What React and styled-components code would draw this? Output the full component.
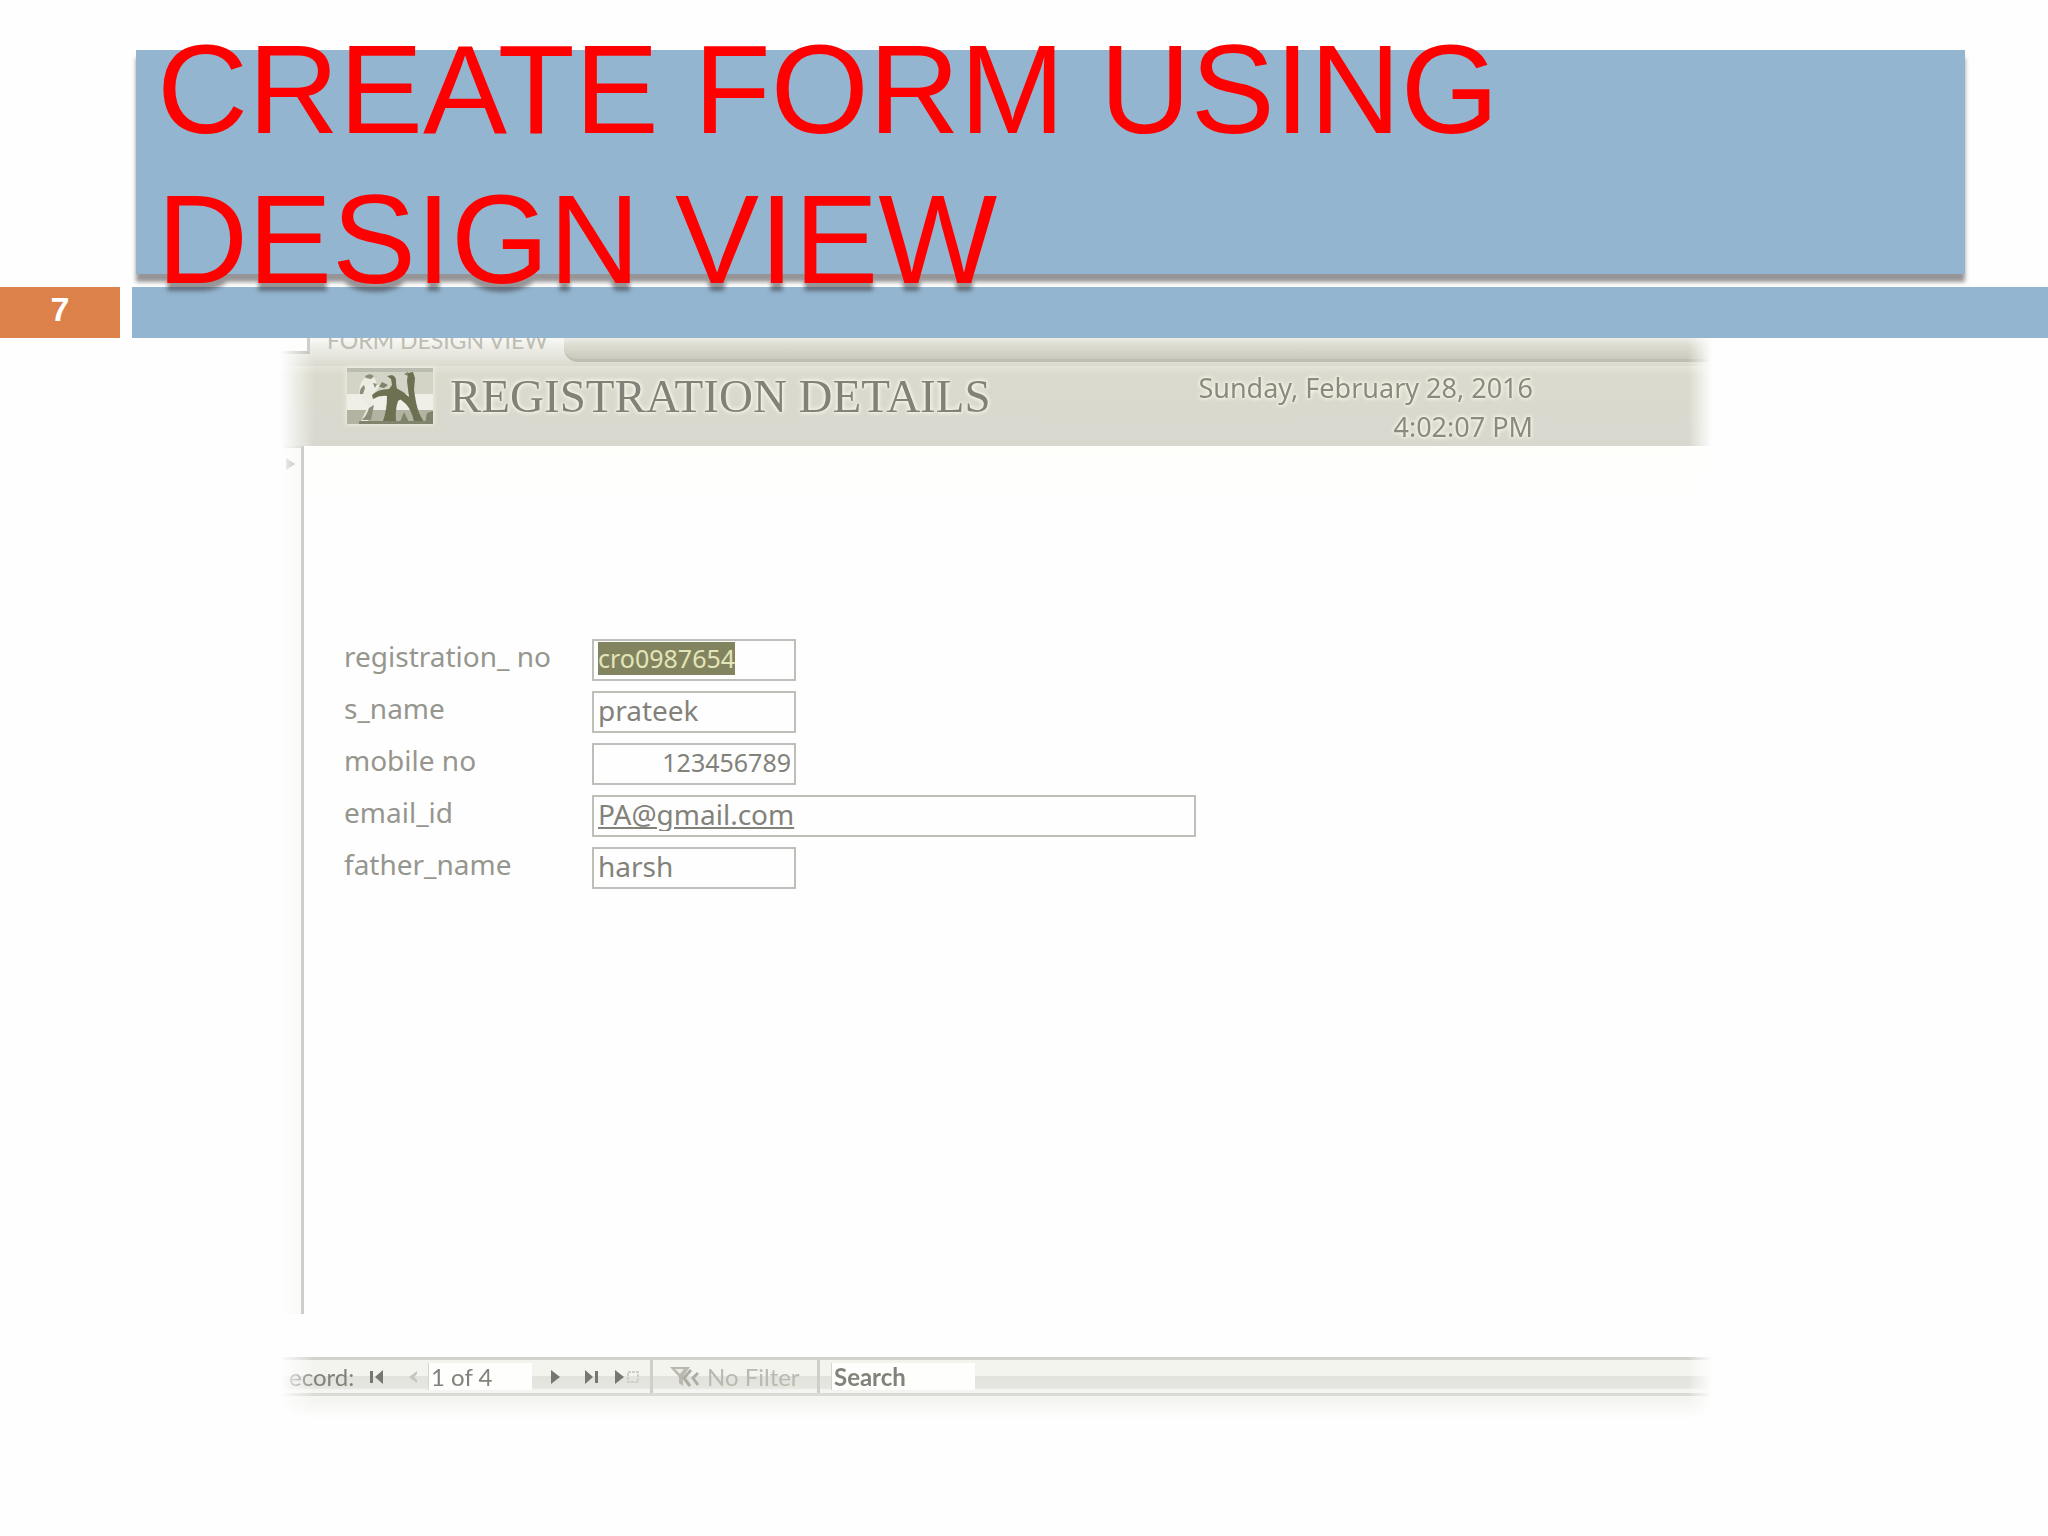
import React from "react";
import styled, { createGlobalStyle } from "styled-components";

const COLOR = {
  BLUE: "#94b5cf",
  ORANGE: "#dc8149",
  HEADER: "#dadace",
  LINE: "#bfbfba",
  TEXT: "#82827a",
  LABEL: "#96968f",
};

const FIELDS = [
  { id: "registration_no", label: "registration_ no", value: "cro0987654", numeric: true, selected: true },
  { id: "s_name", label: "s_name", value: "prateek" },
  { id: "mobile_no", label: "mobile no", value: "123456789", numeric: true, align: "right" },
  { id: "email_id", label: "email_id", value: "PA@gmail.com", wide: true, underline: true },
  { id: "father_name", label: "father_name", value: "harsh" },
];

const GlobalStyle = createGlobalStyle`
  * {
    box-sizing: border-box;
  }
  body {
    margin: 0;
    background-color: #fefefe;
    font-family: Lato, "Liberation Sans", sans-serif;
  }
`;

const Logo = () => (
  <LogoImage viewBox="0 0 86 56" aria-label="Logo">
    <rect width="86" height="56" fill="#d3d4c6" />
    <rect width="86" height="4" fill="#bcbdb1" />
    <rect y="26" width="86" height="16" fill="#efefe8" />
    <rect y="42" width="86" height="14" fill="#b2b4a1" />
    <path d="M12 26q0-14 9-18 9 0 8 8l4 2-8 10 1 12-5 13h-7l7-14z" fill="#ebece2" />
    <path d="M13 26q-1-5 4-9l1 3-2 6zM18 8l5-2 4 2-3 3-5-1zM26 15l4 1-2 4zM22 40l5-3-3 15h-9q5-5 7-12z" fill="#8c8e7a" />
    <path d="M40 8l5-1q5 2 4 8l1 7q4 2 6 8l-5 3q-3 9-2 20H36q4-11 4-25-7-1-14 3l-1-4q6-6 17-6l3-4-1-6z" fill="#6d7152" />
    <path d="M49 20q7 3 13 9l-2-16 1-8 5-1 2 6-1 12 2 12q2 11 8 20H67q-2-11-8-18-6-5-11-9z" fill="#6d7152" />
    <path d="M35 14l6 3-4 3-5-1zM57 6l4-2v4zM57 44l5 10h-9zM80 45l6-2v12h-8z" fill="#80836b" />
    <path d="M12 53h74v3H12z" fill="#81846c" />
  </LogoImage>
);

const App = () => (
  <>
    <GlobalStyle />
    <Slide>
      <Banner>
        <Title>
          CREATE FORM USING
          <br />
          DESIGN VIEW
        </Title>
      </Banner>
      <Strip>
        <PageNumber>7</PageNumber>
        <StripBar />
      </Strip>
      <Window>
        <TabRow>
          <TabCorner />
          <Tab>FORM DESIGN VIEW</Tab>
          <TabFiller />
        </TabRow>
        <Header>
          <Logo />
          <FormTitle>REGISTRATION DETAILS</FormTitle>
          <Timestamp>
            Sunday, February 28, 2016
            <br />
            4:02:07 PM
          </Timestamp>
        </Header>
        <Body>
          <Selector>
            <svg width="12" height="14" viewBox="0 0 12 14">
              <path d="M2 1l9 6-9 6z" fill="#85857f" />
            </svg>
          </Selector>
          <Form>
            {FIELDS.map((field) => (
              <Row key={field.id}>
                <Label htmlFor={field.id}>{field.label}</Label>
                <Frame $wide={field.wide}>
                  <Input
                    id={field.id}
                    defaultValue={field.value}
                    $align={field.align}
                    $numeric={field.numeric}
                    $selected={field.selected}
                    $underline={field.underline}
                  />
                </Frame>
              </Row>
            ))}
          </Form>
        </Body>
        <Navigator>
          <RecordLabel htmlFor="record">ecord:</RecordLabel>
          <NavButton aria-label="First record">
            <svg width="14" height="14" viewBox="0 0 14 14">
              <path d="M0 1h3v12H0zM13 0v14L5 7z" />
            </svg>
          </NavButton>
          <NavButton aria-label="Previous record" $faint>
            <svg width="10" height="14" viewBox="0 0 10 14">
              <path d="M9 1v3L6 7l3 3v3L1 7z" />
            </svg>
          </NavButton>
          <NavInput id="record" defaultValue="1 of 4" />
          <NavButton aria-label="Next record">
            <svg width="10" height="14" viewBox="0 0 10 14">
              <path d="M1 0v14l9-7z" />
            </svg>
          </NavButton>
          <NavButton aria-label="Last record">
            <svg width="14" height="14" viewBox="0 0 14 14">
              <path d="M1 0v14l8-7zM11 1h3v12h-3z" />
            </svg>
          </NavButton>
          <NavButton aria-label="New record">
            <svg width="26" height="14" viewBox="0 0 26 14">
              <path d="M1 0v14l9-7z" />
              <path d="M14 2h10v10H14z" fill="none" stroke="#cfcfc8" strokeWidth="2" strokeDasharray="3 1" />
            </svg>
          </NavButton>
          <FilterButton>
            <svg width="30" height="22" viewBox="0 0 30 22">
              <path d="M0 1h20l-5 7-2 3v9l-4-3v-6z" fill="#b9b9b0" />
              <path d="M5 3h9l-4 5z" fill="#ecece6" />
              <path d="M21 4l-7 8 6 8M28 7l-5 5 5 7" fill="none" stroke="#adada3" strokeWidth="3" />
            </svg>
            No Filter
          </FilterButton>
          <SearchInput aria-label="Search" defaultValue="Search" />
        </Navigator>
      </Window>
    </Slide>
  </>
);

const Slide = styled.main`
  min-height: 100vh;
  padding-top: 50px;
`;

/* The shadow falls from the panel and its overflowing text as one shape */
const Banner = styled.header`
  margin: 0 83px 13px 136px;
  padding: 0 21px;
  display: flow-root;
  background-color: ${COLOR.BLUE};
  filter: drop-shadow(0 8px 2px rgba(45, 42, 46, 0.5));
`;

const Title = styled.h1`
  margin: -35px 0 -41px;
  font-family: "Liberation Sans", Arial, sans-serif;
  font-size: 126px;
  line-height: 150px;
  font-weight: normal;
  color: #ff0000;
`;

const Strip = styled.div`
  display: flex;
  gap: 12px;
`;

const PageNumber = styled.div`
  width: 120px;
  padding-bottom: 6px;
  background-color: ${COLOR.ORANGE};
  color: white;
  font-family: "Liberation Sans", Arial, sans-serif;
  font-size: 34px;
  line-height: 45px;
  font-weight: bold;
  text-align: center;
`;

const StripBar = styled.div`
  flex: 1;
  background-color: ${COLOR.BLUE};
`;

const Window = styled.section`
  margin: 0 334px 0 280px;
  padding-bottom: 40px;
  color: ${COLOR.TEXT};
  mask-image: linear-gradient(
    to right,
    transparent,
    black 34px,
    black calc(100% - 26px),
    transparent calc(100% - 2px)
  );
`;

const TabRow = styled.div`
  display: flex;
  align-items: flex-end;
  height: 28px;
  overflow: hidden;
  background: linear-gradient(#f8f8f5, #e6e6de 60%, ${COLOR.HEADER});
`;

const TabCorner = styled.div`
  align-self: flex-start;
  width: 30px;
  height: 16px;
  background-color: #fdfdfb;
  border-right: 3px solid #c6c6c1;
  border-bottom: 3px solid #b9b9b4;
`;

const Tab = styled.div`
  width: 254px;
  padding: 0 0 11px 17px;
  font-size: 23px;
  line-height: 30px;
  color: #bdbdb2;
  white-space: nowrap;
`;

const TabFiller = styled.div`
  flex: 1;
  height: 24px;
  margin-bottom: 4px;
  border-bottom: 3px solid #bfbfb1;
  border-bottom-left-radius: 14px;
  background: linear-gradient(#ecece6, #dadacf 40%, #cacabe);
`;

const Header = styled.div`
  display: flex;
  align-items: flex-start;
  padding: 2px 181px 0 67px;
  background: linear-gradient(#e4e5da, ${COLOR.HEADER} 10%, #d8d8cf);
  text-shadow: 0 0 5px #f8f8ea, 0 0 4px #f8f8ea, 0 0 2px #f8f8ea;
`;

const LogoImage = styled.svg`
  width: 86px;
  height: 56px;
  box-shadow: 0 0 4px 1px #eeeee0;
`;

const FormTitle = styled.h2`
  flex: 1;
  margin: 0 0 0 17px;
  font-family: "Liberation Serif", serif;
  font-size: 47px;
  line-height: 56px;
  font-weight: normal;
`;

const Timestamp = styled.div`
  font-family: "Noto Sans", sans-serif;
  font-size: 27px;
  line-height: 39px;
  color: #8a8a80;
  text-align: right;
`;

const Body = styled.div`
  display: flex;
  min-height: 868px;
  margin-bottom: 43px;
`;

const Selector = styled.div`
  width: 24px;
  padding: 9px 0 0 4px;
  line-height: 14px;
  background-color: #f7f7f4;
  border-top: 2px solid #c9c9c4;
  border-right: 3px solid #b5b5b0;
`;

const Form = styled.form`
  flex: 1;
  display: flex;
  flex-direction: column;
  gap: 10px;
  padding: 193px 40px 0;
  background: linear-gradient(#fefefb, #fefefe 60px);
`;

const Row = styled.div`
  display: flex;
`;

const Label = styled.label`
  width: 248px;
  font-family: "Noto Sans", sans-serif;
  font-size: 28px;
  line-height: 35px;
  color: ${COLOR.LABEL};
`;

const Frame = styled.div`
  width: ${({ $wide }) => ($wide ? 604 : 204)}px;
  height: 42px;
  border: 2px solid ${COLOR.LINE};
  padding: 1px 3px 0 4px;
`;

const Input = styled.input`
  display: block;
  width: ${({ $selected }) => ($selected ? "auto" : "100%")};
  field-sizing: ${({ $selected }) => ($selected ? "content" : "fixed")};
  height: 33px;
  padding: 0;
  border: 0;
  outline: 0;
  background-color: ${({ $selected }) => ($selected ? "#82845f" : "transparent")};
  color: ${({ $selected }) => ($selected ? "#e3e5b9" : COLOR.TEXT)};
  font-family: "Noto Sans", sans-serif;
  font-size: ${({ $numeric }) => ($numeric ? 25 : 28)}px;
  line-height: 33px;
  text-align: ${({ $align }) => $align || "left"};
  text-decoration: ${({ $underline }) => ($underline ? "underline" : "none")};
`;

const Navigator = styled.div`
  display: grid;
  grid-template-columns: 76px 42px 30px 104px 46px 26px 46px 170px 144px 1fr;
  align-items: center;
  height: 39px;
  border-top: 3px solid #d2d2cd;
  border-bottom: 3px solid #dadad6;
  background: linear-gradient(#f4f4ef 48%, #e3e3de 50%, #e6e6e0 85%, #f4f4f0 90%);
  box-shadow: 0 12px 16px #f4f3ef;
  font-size: 24px;
`;

const RecordLabel = styled.label`
  padding-left: 9px;
`;

const NavButton = styled.button`
  display: flex;
  justify-content: center;
  padding: 0;
  border: 0;
  background: none;
  fill: ${({ $faint }) => ($faint ? "#c6c6be" : "#77776d")};
`;

const NavInput = styled.input`
  width: 100%;
  height: 27px;
  padding: 0 2px;
  border: 0;
  border-left: 1px solid #d5d5d0;
  background-color: #fefefc;
  color: ${COLOR.TEXT};
  font: 24px Lato, sans-serif;
`;

const FilterButton = styled.button`
  display: flex;
  align-items: center;
  gap: 7px;
  height: 100%;
  padding: 0 0 0 17px;
  border: 0;
  border-left: 3px solid #cfcfca;
  border-right: 3px solid #cfcfca;
  background: none;
  color: #b9b9b0;
  font: 24px Lato, sans-serif;
`;

const SearchInput = styled(NavInput)`
  width: 144px;
  margin-left: 11px;
  font-weight: bold;
`;

export default App;
